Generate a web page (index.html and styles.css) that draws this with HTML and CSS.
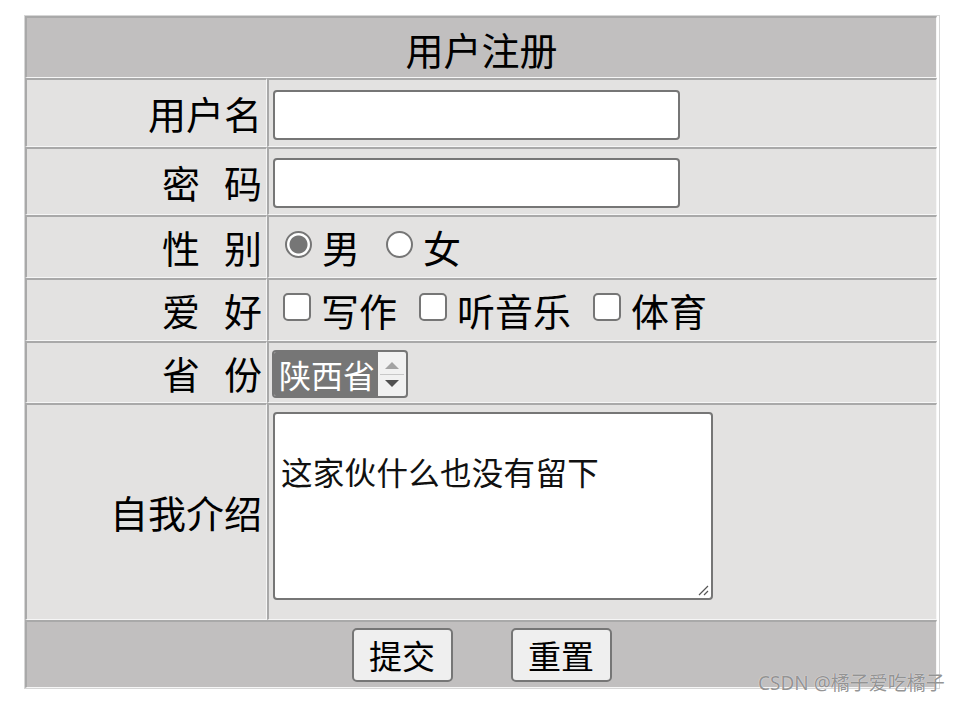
FILE: index.html
```html
<!DOCTYPE html>
<html lang="zh">
<head>
<meta charset="utf-8">
<title>用户注册</title>
<link rel="stylesheet" href="styles.css">
</head>
<body>
<div class="form-table">
  <div class="cell head">用户注册</div>

  <div class="cell label">用户名</div>
  <div class="cell field row-input"><span class="textbox"></span></div>

  <div class="cell label">密<span class="sp"></span>码</div>
  <div class="cell field row-input"><span class="textbox"></span></div>

  <div class="cell label">性<span class="sp"></span>别</div>
  <div class="cell field">
    <span class="radio checked"></span><span class="opt">男</span>
    <span class="radio r2"></span><span class="opt">女</span>
  </div>

  <div class="cell label">爱<span class="sp"></span>好</div>
  <div class="cell field">
    <span class="check"></span><span class="opt">写作</span>
    <span class="check"></span><span class="opt">听音乐</span>
    <span class="check"></span><span class="opt">体育</span>
  </div>

  <div class="cell label">省<span class="sp"></span>份</div>
  <div class="cell field">
    <div class="listbox">
      <span class="selected">陕西省</span>
      <span class="scroll">
        <span class="arrow up"></span>
        <span class="sep"></span>
        <span class="arrow down"></span>
      </span>
    </div>
  </div>

  <div class="cell label">自我介绍</div>
  <div class="cell field area-cell">
    <div class="textarea">这家伙什么也没有留下
      <svg class="grip" width="12" height="12" viewBox="0 0 12 12"><path d="M11 2 L2 11 M11 7 L7 11" stroke="#555" stroke-width="1.2" fill="none"/></svg>
    </div>
  </div>

  <div class="cell foot">
    <span class="btn">提交</span>
    <span class="btn">重置</span>
  </div>
</div>
<div class="watermark">CSDN @橘子爱吃橘子</div>
</body>
</html>
```

FILE: styles.css
```css
html, body {
  margin: 0;
  padding: 0;
  background: #fff;
}
body {
  font-family: "Noto Sans CJK SC", "Noto Sans", sans-serif;
  color: #000;
}
.form-table {
  margin: 15px 0 0 24px;
  width: 914px;
  border: 1px solid #d6d6d6;
  display: grid;
  grid-template-columns: 242px 670px;
  grid-template-rows: 62px 69px 68px 63px 63px 62px 217px 68px;
}
.cell {
  box-sizing: border-box;
  border-top: 2px solid #a9a9a9;
  border-left: 2px solid #a9a9a9;
  border-right: 1px solid #f6f6f6;
  border-bottom: 1px solid #f6f6f6;
  background: #e3e2e1;
  font-size: 38px;
  line-height: 1;
}
.head {
  grid-column: 1 / 3;
  background: #c1bfbf;
  display: flex;
  align-items: center;
  justify-content: center;
  padding-top: 2px;
}
.label {
  display: flex;
  align-items: center;
  justify-content: flex-end;
  padding-right: 4px;
}
.sp {
  display: inline-block;
  width: 24px;
}
.field {
  display: flex;
  align-items: center;
  padding-left: 4px;
}
.row-input {
  padding-top: 3px;
}
.textbox {
  display: block;
  width: 407px;
  height: 50px;
  box-sizing: border-box;
  border: 2px solid #767676;
  border-radius: 4px;
  background: #fff;
}
.radio {
  display: inline-block;
  box-sizing: border-box;
  width: 27px;
  height: 27px;
  border: 2px solid #767676;
  border-radius: 50%;
  background: #fff;
  margin: -6px 10px 0 12px;
}
.radio.checked {
  background: radial-gradient(circle, #767676 0 8.5px, #fff 9.5px);
}
.radio.r2 {
  margin-left: 26px;
}
.check {
  display: inline-block;
  box-sizing: border-box;
  width: 28px;
  height: 28px;
  border: 2px solid #767676;
  border-radius: 5px;
  background: #fff;
  margin: -6px 10px 0 22px;
}
.check:first-child {
  margin-left: 10px;
}
.opt {
  display: inline-block;
}
.listbox {
  box-sizing: border-box;
  width: 136px;
  height: 48px;
  border: 2px solid #767676;
  border-radius: 4px;
  background: #f1f1f1;
  display: flex;
  overflow: hidden;
  margin-left: -1px;
  margin-top: 3px;
}
.selected {
  background: #767676;
  color: #fff;
  font-size: 32px;
  width: 104px;
  display: flex;
  align-items: center;
  padding-left: 5px;
  box-sizing: border-box;
}
.scroll {
  flex: 1;
  display: flex;
  flex-direction: column;
  align-items: center;
  justify-content: center;
  gap: 5px;
}
.arrow {
  width: 0;
  height: 0;
  border-left: 7px solid transparent;
  border-right: 7px solid transparent;
}
.arrow.up {
  border-bottom: 7px solid #a3a3a3;
}
.arrow.down {
  border-top: 7px solid #505050;
}
.sep {
  width: 24px;
  height: 1px;
  background: #c8c8c8;
}
.area-cell {
  align-items: flex-start;
  padding-top: 7px;
}
.textarea {
  position: relative;
  box-sizing: border-box;
  width: 440px;
  height: 188px;
  border: 2px solid #767676;
  border-radius: 4px;
  background: #fff;
  font-size: 31.5px;
  line-height: 1;
  padding: 42px 0 0 6px;
  color: #111;
  font-weight: 400;
  letter-spacing: 0.3px;
}
.grip {
  position: absolute;
  right: 2px;
  bottom: 2px;
}
.foot {
  grid-column: 1 / 3;
  background: #c1bfbf;
  display: flex;
  align-items: center;
  justify-content: center;
  gap: 58px;
  padding-top: 1px;
}
.btn {
  box-sizing: border-box;
  width: 101px;
  height: 54px;
  border: 2px solid #767676;
  border-radius: 5px;
  background: #efefef;
  font-size: 33px;
  display: flex;
  align-items: center;
  justify-content: center;
}
.watermark {
  position: absolute;
  left: 758px;
  top: 671px;
  font-size: 19px;
  line-height: 24px;
  color: rgba(120, 120, 120, 0.8);
  text-shadow: 0 0 1px #fff;
  font-family: "Noto Sans", "Noto Sans CJK SC", sans-serif;
}
```
